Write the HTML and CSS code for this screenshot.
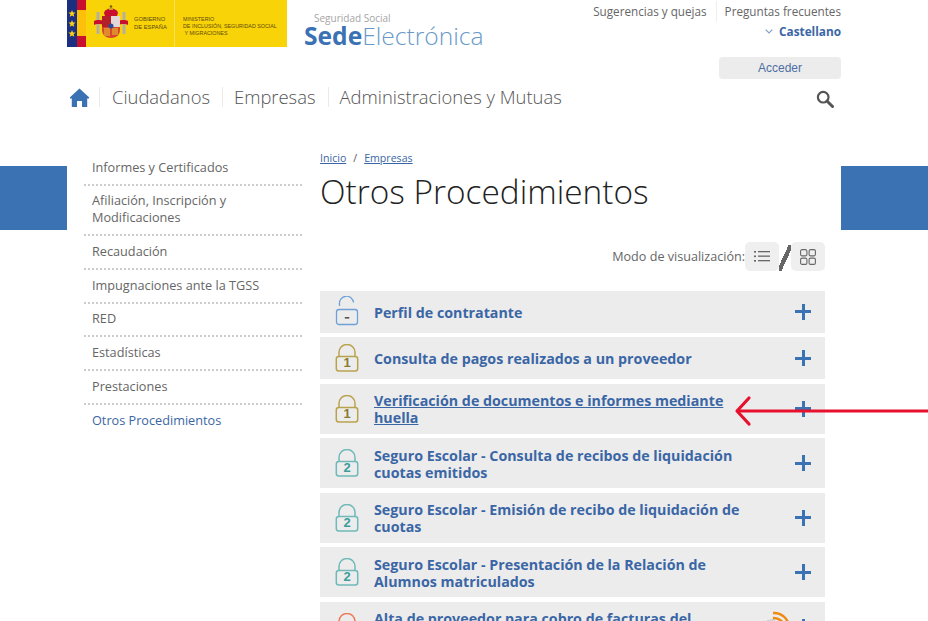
FILE: index.html
```html
<!DOCTYPE html>
<html lang="es">
<head>
<meta charset="utf-8">
<title>Otros Procedimientos</title>
<link rel="stylesheet" href="styles.css">
</head>
<body>
<svg width="0" height="0" class="defs">
  <defs>
    <symbol id="lock" viewBox="0 0 24 28">
      <path d="M4 13V8.500a8 8 0 0 1 16 0V13" fill="none" stroke="currentColor" stroke-width="1.500"/>
      <rect x="1.300" y="12.500" width="21.400" height="14.500" rx="2.500" fill="none" stroke="currentColor" stroke-width="1.500"/>
    </symbol>
  </defs>
</svg>
<header class="header">
  <div class="brand-row">
    <div class="gov-logo">
      <div class="flag-eu">
        <svg width="10" height="47" viewBox="0 0 10 47"><g fill="#f7d117"><path d="M5 10l1 2.400 2.600.2-2 1.700.7 2.500L5 15.400l-2.300 1.400.7-2.500-2-1.700 2.600-.2z"/><path d="M5 20l1 2.400 2.600.2-2 1.700.7 2.500L5 25.400l-2.300 1.400.7-2.500-2-1.700 2.600-.2z"/><path d="M5 30l1 2.400 2.600.2-2 1.700.7 2.500L5 35.400l-2.300 1.400.7-2.500-2-1.700 2.600-.2z"/></g></svg>
      </div>
      <div class="flag-es"></div>
      <svg class="shield" width="34" height="36" viewBox="0 0 34 36">
        <path d="M10 9c1-6 13-6 14 0l-1 3H11z" fill="#c8102e"/>
        <path d="M15 4h4v2h-4z" fill="#c9a227"/><circle cx="17" cy="2.500" r="1.300" fill="#7a5a10"/>
        <rect x="2.500" y="8" width="3" height="22" fill="#b5b0a0"/><rect x="28.500" y="8" width="3" height="22" fill="#b5b0a0"/>
        <path d="M0 17c4-2 6 0 9-1v4c-3 1-5-1-9 1zM25 16c3 1 5-1 9 1v4c-4-2-6 0-9-1z" fill="#c8102e"/>
        <path d="M8 12h18v14c0 5-4 8-9 8s-9-3-9-8z" fill="#d8462b"/>
        <path d="M17 12h9v11h-9z" fill="#e3d6d6"/><path d="M8 12h9v11H8z" fill="#b3202a"/>
        <path d="M10 24h6v8h-6zM18 24h6v7h-6z" fill="#e08a2e"/>
        <circle cx="17" cy="22" r="2.500" fill="#2a4a9c"/>
      </svg>
      <div class="gov-text gov-name">GOBIERNO<br>DE ESPAÑA</div>
      <div class="gov-text gov-min">MINISTERIO<br>DE INCLUSIÓN, SEGURIDAD SOCIAL<br>&nbsp;Y MIGRACIONES</div>
    </div>
    <div class="sede">
      <div class="sede-sup">Seguridad Social</div>
      <div class="sede-main"><b>Sede</b>Electrónica</div>
    </div>
    <div class="utility">
      <div class="util-links"><a>Sugerencias y quejas</a><a>Preguntas frecuentes</a></div>
      <div class="lang">
        <svg width="8" height="5" viewBox="0 0 8 5"><path d="M.7.7 4 4l3.300-3.300" fill="none" stroke="#7f9fc6" stroke-width="1.100"/></svg>
        <b>Castellano</b>
      </div>
      <button class="login">Acceder</button>
    </div>
  </div>
  <nav class="nav">
    <svg class="home" width="19" height="19" viewBox="0 0 19 19"><path d="M9.500.5 19 9.300v1.200h-1.800V19H12v-6H7v6H1.800v-8.500H0V9.300z" fill="#3b72b3"/></svg>
    <a>Ciudadanos</a><a>Empresas</a><a>Administraciones y Mutuas</a>
    <svg class="search" width="18" height="18" viewBox="0 0 18 18"><circle cx="7.200" cy="7.200" r="5.300" fill="none" stroke="#555" stroke-width="2.200"/><path d="m11 11 5.500 5.500" stroke="#555" stroke-width="3" stroke-linecap="round"/></svg>
  </nav>
</header>
<main class="stage">
  <div class="content">
    <aside class="side">
      <a>Informes y Certificados</a>
      <a>Afiliación, Inscripción y Modificaciones</a>
      <a>Recaudación</a>
      <a>Impugnaciones ante la TGSS</a>
      <a>RED</a>
      <a>Estadísticas</a>
      <a>Prestaciones</a>
      <a class="current">Otros Procedimientos</a>
    </aside>
    <section class="body">
      <div class="crumbs"><a>Inicio</a><span>/</span><a>Empresas</a></div>
      <h1>Otros Procedimientos</h1>
      <div class="view">
        <span>Modo de visualización:</span>
        <div class="view-btn">
          <svg width="16" height="13" viewBox="0 0 16 13"><g fill="#666"><rect y="1" width="2" height="1.600"/><rect y="5.500" width="2" height="1.600"/><rect y="10" width="2" height="1.600"/><rect x="4" y="1" width="12" height="1.300"/><rect x="4" y="5.500" width="12" height="1.300"/><rect x="4" y="10" width="12" height="1.300"/></g></svg>
        </div>
        <i class="slash"></i>
        <div class="view-btn">
          <svg width="16" height="16" viewBox="0 0 16 16"><g fill="none" stroke="#666" stroke-width="1.100"><rect x=".6" y=".6" width="6.300" height="6.300" rx="1.500"/><rect x="9.100" y=".6" width="6.300" height="6.300" rx="1.500"/><rect x=".6" y="9.100" width="6.300" height="6.300" rx="1.500"/><rect x="9.100" y="9.100" width="6.300" height="6.300" rx="1.500"/></g></svg>
        </div>
      </div>
      <ul class="list">
        <li class="row short">
          <span class="lock blue"><svg width="24" height="30" viewBox="0 0 24 30"><path d="M4.500 10V8a7 7 0 0 1 14-1.500" fill="none" stroke="currentColor" stroke-width="1.300"/><rect x="1.500" y="13.500" width="21" height="15" rx="2.500" fill="none" stroke="currentColor" stroke-width="1.300"/><rect x="9.800" y="21" width="4.500" height="1.600" fill="#555"/></svg></span>
          <a>Perfil de contratante</a><em class="plus"></em>
        </li>
        <li class="row short">
          <span class="lock gold"><svg width="24" height="28"><use href="#lock"/></svg><b>1</b></span>
          <a>Consulta de pagos realizados a un proveedor</a><em class="plus"></em>
        </li>
        <li class="row">
          <span class="lock gold"><svg width="24" height="28"><use href="#lock"/></svg><b>1</b></span>
          <a class="hover">Verificación de documentos e informes mediante huella</a><em class="plus"></em>
        </li>
        <li class="row">
          <span class="lock teal"><svg width="24" height="28"><use href="#lock"/></svg><b>2</b></span>
          <a>Seguro Escolar - Consulta de recibos de liquidación cuotas emitidos</a><em class="plus"></em>
        </li>
        <li class="row">
          <span class="lock teal"><svg width="24" height="28"><use href="#lock"/></svg><b>2</b></span>
          <a>Seguro Escolar - Emisión de recibo de liquidación de cuotas</a><em class="plus"></em>
        </li>
        <li class="row">
          <span class="lock teal"><svg width="24" height="28"><use href="#lock"/></svg><b>2</b></span>
          <a>Seguro Escolar - Presentación de la Relación de Alumnos matriculados</a><em class="plus"></em>
        </li>
        <li class="row">
          <span class="lock coral"><svg width="24" height="28"><use href="#lock"/></svg><b>3</b></span>
          <a>Alta de proveedor para cobro de facturas del extranjero</a>
          <span class="badge">
            <span class="badge-text">Registro</span>
            <svg width="32" height="30" viewBox="0 0 32 30"><g fill="none" stroke="#f08a12" stroke-width="2.500"><path d="M12 13a10 10 0 0 1 11 9"/><path d="M12 8a15 15 0 0 1 16 14"/></g></svg>
          </span>
          <em class="plus"></em>
        </li>
      </ul>
    </section>
  </div>
</main>
<svg class="arrow" width="194" height="32" viewBox="0 0 194 32"><path d="M194 16H3" stroke="#e8112d" stroke-width="3"/><path d="M15 3 3 16l12 13" fill="none" stroke="#e8112d" stroke-width="3.200" stroke-linecap="round" stroke-linejoin="round"/></svg>
</body>
</html>
```
FILE: styles.css
```css
html, body {
  margin: 0;
  height: 621px;
  overflow: hidden;
  background: #fff;
}
body {
  position: relative;
  font-family: "Open Sans", sans-serif;
  color: #666;
}
a { color: inherit; text-decoration: none; }
.defs { display: block; height: 0; }

.header { margin-left: 67px; width: 774px; height: 166px; }
.brand-row { display: flex; align-items: flex-start; height: 79px; }

.gov-logo {
  display: flex;
  width: 220px;
  height: 47px;
  background: #f8d307;
  flex: none;
}
.flag-eu { width: 10px; height: 47px; background: #1c2e80; }
.flag-eu svg { display: block; }
.flag-es {
  width: 9px;
  height: 47px;
  background: linear-gradient(#c8102e 0 10px, #fcbf0a 10px 36px, #c8102e 36px);
}
.shield { margin: 4px 0 0 8px; flex: none; }
.gov-text { font-family: "Liberation Sans", sans-serif; color: #5d4a10; white-space: nowrap; }
.gov-name { font-size: 5.800px; line-height: 7.500px; margin: 16px 0 0 6px; width: 40px; flex: none; }
.gov-min {
  font-size: 5.350px;
  line-height: 6.800px;
  padding: 16px 0 0 8px;
  border-left: 1px solid #fbe25a;
  box-sizing: border-box;
  height: 47px;
}

.sede { margin: 12px 0 0 17px; width: 260px; flex: none; }
.sede-sup { font-size: 10px; line-height: 12px; color: #a5a5a5; margin-left: 10px; }
.sede-main { font-size: 24.600px; line-height: 24px; font-weight: 300; color: #6a9ac9; white-space: nowrap; }
.sede-main b { font-weight: 700; color: #3b72b3; }

.utility { flex: 1; display: flex; flex-direction: column; align-items: flex-end; }
.util-links { display: flex; font-size: 11.700px; line-height: 21px; margin-top: 1px; color: #666; white-space: nowrap; }
.util-links a + a { margin-left: 9px; padding-left: 8px; border-left: 1px solid #eee; }
.lang { display: flex; align-items: center; gap: 6px; font-size: 11.800px; line-height: 20px; margin-top: -1px; color: #3a66a5; }
.login {
  width: 122px;
  height: 22px;
  margin-top: 15.500px;
  padding: 0;
  border: 0;
  border-radius: 4px;
  background: #ececec;
  color: #4d6fa3;
  font: 12px "Liberation Sans", sans-serif;
}

.nav { display: flex; align-items: center; height: 36px; font-size: 18.400px; font-weight: 300; color: #555; white-space: nowrap; }
.nav a { padding: 0 12px 0 11px; border-left: 1px solid #eaeaea; line-height: 20px; }
.nav a:first-of-type { padding-left: 12px; }
.home { margin: 0 10px 0 3px; flex: none; }
.search { margin-left: auto; margin-right: 7px; margin-top: 3px; }

.stage {
  background: linear-gradient(#3b72b3, #3b72b3) 0 0 / 100% 64px no-repeat;
}
.content { margin-left: 67px; width: 774px; background: #fff; display: flex; gap: 18px; padding-left: 17px; box-sizing: border-box; }

.side { width: 218px; flex: none; margin-top: -14px; font-size: 12.700px; line-height: 17px; color: #666; }
.side a {
  display: block;
  padding: 6.700px 8px 8px;
  border-bottom: 2px dotted #ccc;
}
.side a:last-child { border-bottom: 0; }
.side .current { color: #3a66a5; }

.body { width: 505px; flex: none; }
.crumbs { display: flex; gap: 7px; font-size: 10.600px; line-height: 14px; color: #555; margin-top: -15px; }
.crumbs a { color: #3a66a5; text-decoration: underline; }
h1 { margin: 4px 0 0; font-size: 33.400px; line-height: 45px; font-weight: 300; color: #222; white-space: nowrap; }

.view { display: flex; align-items: center; justify-content: flex-end; margin-top: 28px; height: 29px; font-size: 12.600px; color: #666; }
.view-btn { width: 34px; height: 29px; border-radius: 5px; background: #efefef; display: flex; align-items: center; justify-content: center; }
.view span { margin-right: 0; }
.slash { width: 12px; height: 26px; background: linear-gradient(to bottom right, transparent 40%, #666 40% 60%, transparent 60%); margin-top: 2px; }

.list { list-style: none; margin: 20px 0 0; padding: 0; display: flex; flex-direction: column; gap: 4.600px; }
.row {
  display: flex;
  align-items: center;
  height: 50px;
  background: #ececec;
  font-size: 14.250px;
  font-weight: 700;
  line-height: 17px;
  color: #3a66a5;
  flex: none;
}
.row.short { height: 41.700px; }
.row a { width: 368px; flex: none; padding-top: 1px; }
.row a.hover { text-decoration: underline; }
.lock { position: relative; width: 24px; height: 28px; margin: 0 15px; flex: none; display: block; }
.lock svg { display: block; }
.lock b { position: absolute; left: 0; right: 0; top: 12px; text-align: center; font-family: "Liberation Sans", sans-serif; font-size: 13px; line-height: 14px; }
.lock.blue { color: #6fa0d6; margin-top: -3px; }
.lock.gold { color: #b9a24c; }
.lock.gold b { color: #8b7a2c; }
.lock.teal { color: #6fb9b9; }
.lock.teal b { color: #3c9c9c; }
.lock.coral { color: #ee7a5e; }
.badge { position: relative; display: block; width: 32px; height: 30px; margin: -14px 0 0 19px; flex: none; }
.badge svg { display: block; }
.badge-text { position: absolute; right: 19px; top: 11px; font-size: 5px; line-height: 6px; font-weight: 400; color: #999; transform: rotate(-20deg); transform-origin: right center; }
.plus {
  margin-left: auto;
  margin-right: 14px;
  width: 16px;
  height: 16px;
  flex: none;
  background:
    linear-gradient(#3b72b3, #3b72b3) center / 100% 3px no-repeat,
    linear-gradient(#3b72b3, #3b72b3) center / 3px 100% no-repeat;
}

.arrow { position: absolute; left: 734px; top: 395px; }
```
